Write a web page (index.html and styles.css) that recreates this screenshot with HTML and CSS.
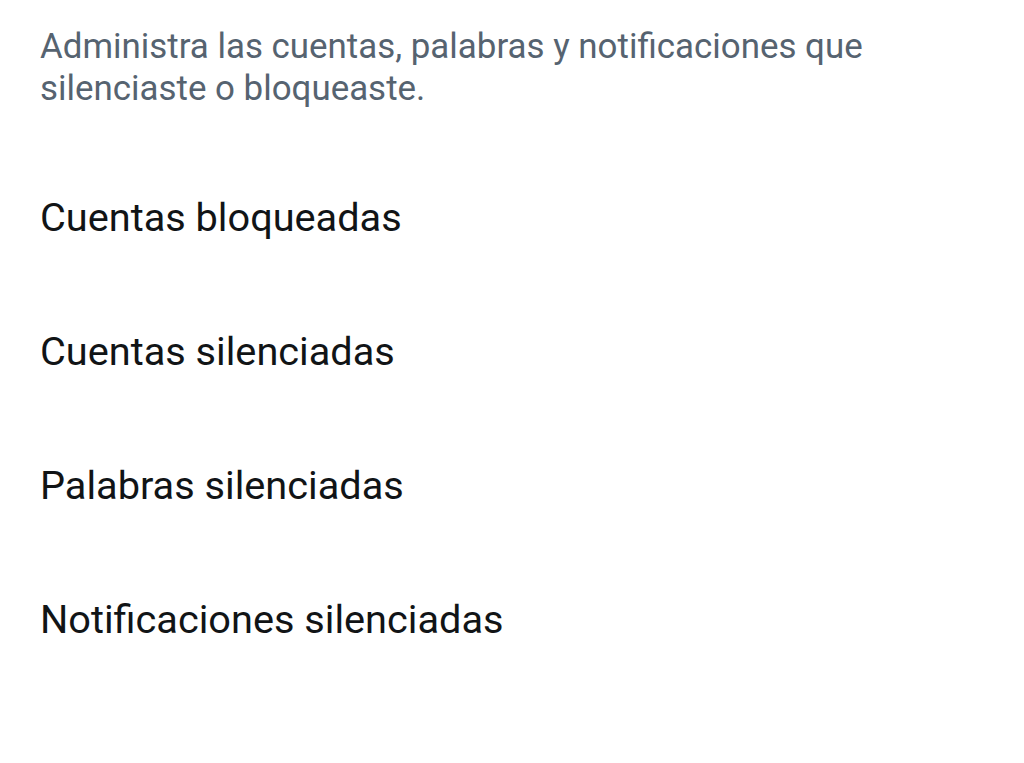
FILE: index.html
```html
<!DOCTYPE html>
<html lang="es">
<head>
<meta charset="utf-8">
<link rel="stylesheet" href="styles.css">
</head>
<body>
<div class="page">
  <p class="desc">Administra las cuentas, palabras y notificaciones que silenciaste o bloqueaste.</p>
  <ul class="list">
    <li class="item">Cuentas bloqueadas</li>
    <li class="item">Cuentas silenciadas</li>
    <li class="item">Palabras silenciadas</li>
    <li class="item">Notificaciones silenciadas</li>
  </ul>
</div>
</body>
</html>
```
FILE: styles.css
```css
html, body {
  margin: 0;
  padding: 0;
  background: #ffffff;
}
body {
  font-family: Roboto, "Liberation Sans", sans-serif;
  width: 1024px;
  height: 763px;
  overflow: hidden;
}
.page {
  padding: 26px 41px 0 40px;
}
.desc {
  margin: 0;
  width: 900px;
  font-size: 34.9px;
  line-height: 42px;
  color: #566370;
}
.list {
  list-style: none;
  margin: 0;
  padding: 0;
  margin-top: 41px;
}
.item {
  height: 134px;
  line-height: 134px;
  font-size: 39.7px;
  color: #111416;
}
```
